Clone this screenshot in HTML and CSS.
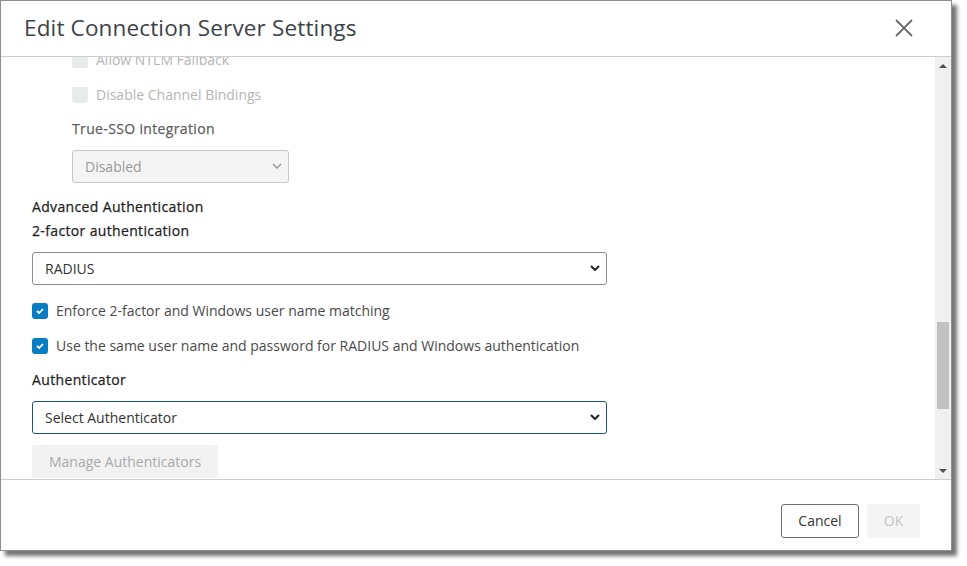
FILE: index.html
```html
<!DOCTYPE html>
<html>
<head>
<meta charset="utf-8">
<link rel="stylesheet" href="styles.css">
</head>
<body>
<div class="dialog">
  <div class="header">
    <h1 class="title">Edit Connection Server Settings</h1>
    <svg class="close" width="20" height="20" viewBox="0 0 20 20"><path d="M2 2 L18 18 M18 2 L2 18" stroke="#6b6b6b" stroke-width="1.8" fill="none"/></svg>
  </div>
  <div class="body">
    <div class="content">
      <div class="inner">
        <div class="check-row nested disabled"><span class="cb"></span><span>Allow NTLM Fallback</span></div>
        <div class="check-row nested disabled"><span class="cb"></span><span>Disable Channel Bindings</span></div>
        <div class="label nested muted">True-SSO integration</div>
        <div class="select small nested is-disabled"><span>Disabled</span>
          <svg width="10" height="6" viewBox="0 0 10 6"><path d="M1 1 L5 5 L9 1" stroke="#9a9a9a" stroke-width="1.5" fill="none"/></svg></div>
        <div class="label section">Advanced Authentication</div>
        <div class="label">2-factor authentication</div>
        <div class="select wide gap8"><span>RADIUS</span>
          <svg width="10" height="6" viewBox="0 0 10 6"><path d="M1 1 L5 5 L9 1" stroke="#222" stroke-width="2" fill="none"/></svg></div>
        <div class="check-row first"><span class="cb on"><svg width="10" height="8" viewBox="0 0 10 8"><path d="M2 4 L4.2 6 L8 2" stroke="#fff" stroke-width="1.8" fill="none"/></svg></span><span>Enforce 2-factor and Windows user name matching</span></div>
        <div class="check-row"><span class="cb on"><svg width="10" height="8" viewBox="0 0 10 8"><path d="M2 4 L4.2 6 L8 2" stroke="#fff" stroke-width="1.8" fill="none"/></svg></span><span>Use the same user name and password for RADIUS and Windows authentication</span></div>
        <div class="label auth">Authenticator</div>
        <div class="select wide gap8 focused"><span>Select Authenticator</span>
          <svg width="10" height="6" viewBox="0 0 10 6"><path d="M1 1 L5 5 L9 1" stroke="#222" stroke-width="2" fill="none"/></svg></div>
        <div class="btn-manage">Manage Authenticators</div>
      </div>
    </div>
    <div class="scrollbar">
      <div class="arrow up"></div>
      <div class="track"><div class="thumb"></div></div>
      <div class="arrow down"></div>
    </div>
  </div>
  <div class="footer">
    <div class="btn cancel">Cancel</div>
    <div class="btn ok">OK</div>
  </div>
</div>
</body>
</html>
```

FILE: styles.css
```css
* { box-sizing: border-box; }
html, body { margin: 0; padding: 0; background: #fff; }
body {
  font-family: "Open Sans", "Noto Sans", sans-serif;
  font-size: 14px;
  color: #4a4a4a;
  width: 967px;
  height: 566px;
  overflow: hidden;
}
.dialog {
  width: 952px;
  height: 551px;
  border: 1px solid #8f8f8f;
  background: #fff;
  box-shadow: 5px 5px 4px rgba(0,0,0,0.55);
  display: flex;
  flex-direction: column;
}
.header {
  height: 56px;
  flex: none;
  border-bottom: 1px solid #cfcfcf;
  display: flex;
  align-items: center;
  justify-content: space-between;
  padding: 0 37px 2px 23px;
}
.title {
  margin: 0;
  font-family: "Open Sans", sans-serif;
  font-weight: 400;
  font-size: 22.5px;
  color: #3d4247;
  letter-spacing: 0.15px;
}
.body {
  flex: none;
  height: 422px;
  display: flex;
  overflow: hidden;
}
.content {
  flex: 1;
  overflow: hidden;
  padding-left: 31px;
}
.inner { margin-top: -14px; }
.nested { margin-left: 40px; }
.check-row {
  height: 35px;
  padding-bottom: 2px;
  display: flex;
  align-items: center;
  gap: 8px;
}
.check-row.first { margin-top: 9px; }
.cb {
  width: 16px;
  height: 16px;
  border-radius: 3px;
  background: #e9eaea;
  display: flex;
  align-items: center;
  justify-content: center;
  flex: none;
}
.cb.on { background: #0a7cc1; }
.disabled { color: #b5b5b5; }
.label {
  height: 24px;
  line-height: 22px;
  font-weight: 400;
  letter-spacing: 0.35px;
  color: #1e1e1e;
  -webkit-text-stroke: 0.25px #1e1e1e;
}
.label.nested { height: 34px; line-height: 32px; }
.label.muted { color: #5f5f5f; -webkit-text-stroke: 0.25px #5f5f5f; }
.section { margin-top: 13px; }
.auth { margin-top: 5px; }
.select {
  height: 33px;
  border: 1px solid #8d8d8d;
  border-radius: 3px;
  display: flex;
  align-items: center;
  justify-content: space-between;
  padding: 0 6px 1px 12px;
  color: #333;
}
.select.small { width: 217px; margin-top: 3px; border-color: #c6c6c6; background: #f4f4f4; color: #9a9a9a; }
.select.wide { width: 575px; }
.gap8 { margin-top: 8px; }
.select.focused { border-color: #1d5775; }
.btn-manage {
  margin-top: 11px;
  width: 186px;
  height: 33px;
  padding-bottom: 1px;
  background: #f2f2f2;
  border-radius: 3px;
  color: #a9a9a9;
  display: flex;
  align-items: center;
  justify-content: center;
}
.scrollbar {
  width: 16px;
  flex: none;
  background: #f0f0f0;
  display: flex;
  flex-direction: column;
}
.arrow { height: 17px; flex: none; display: flex; align-items: center; justify-content: center; }
.arrow.up::before {
  content: "";
  border-left: 4px solid transparent;
  border-right: 4px solid transparent;
  border-bottom: 4px solid #505050;
}
.arrow.down::before {
  content: "";
  border-left: 4px solid transparent;
  border-right: 4px solid transparent;
  border-top: 4px solid #505050;
}
.track { flex: 1; padding: 248px 2px 0 2px; }
.thumb { height: 87px; background: #c1c1c1; }
.footer {
  flex: 1;
  border-top: 1px solid #cfcfcf;
  display: flex;
  justify-content: flex-end;
  align-items: flex-start;
  padding: 24px 31px 0 0;
  gap: 8px;
}
.btn {
  height: 34px;
  padding-bottom: 1px;
  border-radius: 3px;
  display: flex;
  align-items: center;
  justify-content: center;
}
.btn.cancel { width: 78px; border: 1px solid #6f6f6f; color: #333; }
.btn.ok { width: 53px; background: #f4f4f4; color: #c4c4c4; }
```
